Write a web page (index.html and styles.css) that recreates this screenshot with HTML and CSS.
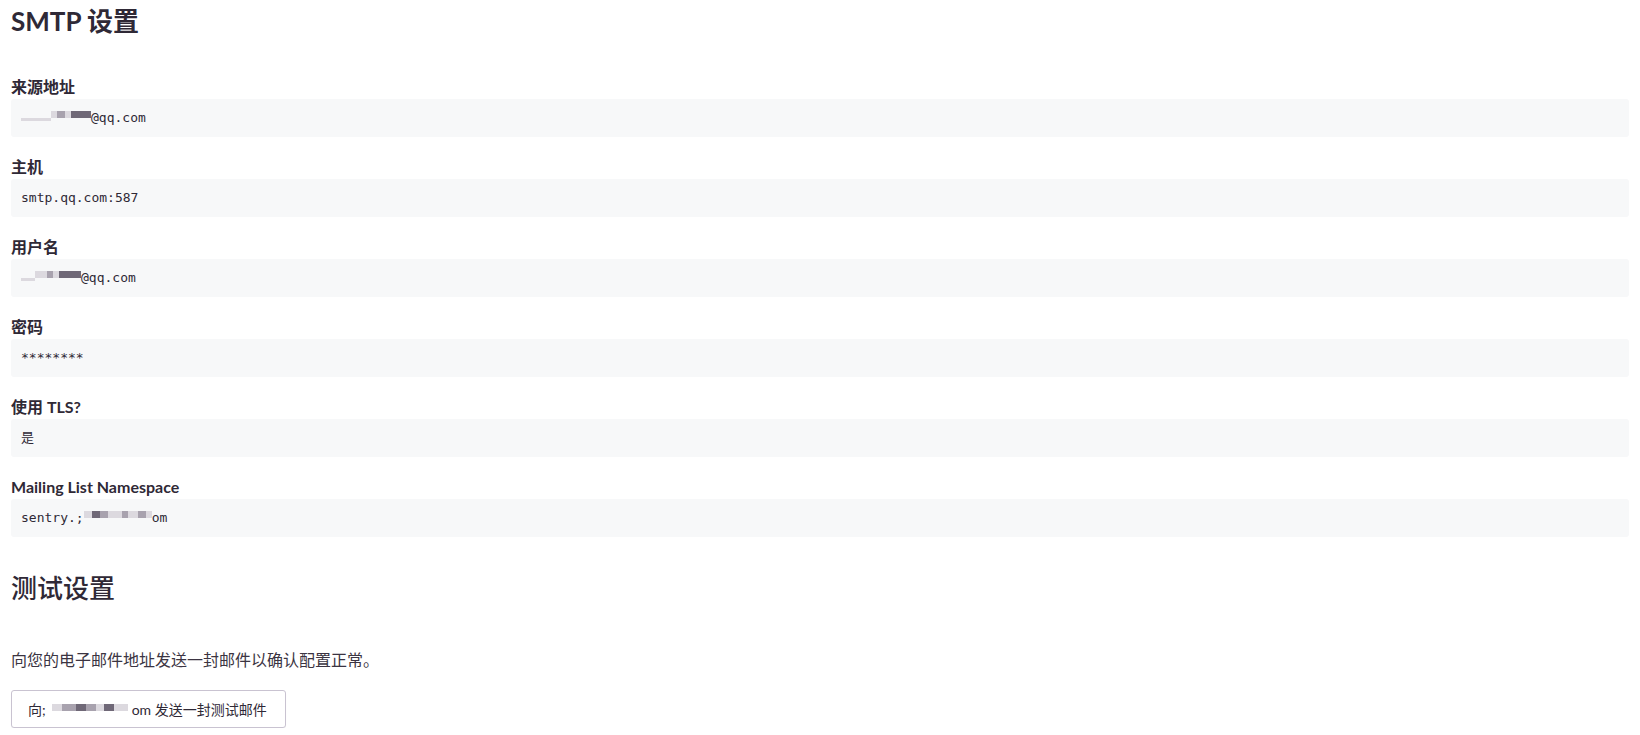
FILE: index.html
```
<!DOCTYPE html>
<html>
<head>
<meta charset="utf-8">
<meta name="viewport" content="width=device-width, initial-scale=1">
<title>SMTP 设置</title>
<link rel="stylesheet" href="styles.css">
</head>
<body>

<h2 class="section-title">SMTP 设置</h2>

<div class="field">
  <label>来源地址</label>
  <div class="value"><span class="blur"><i class="b lt w30 lo"></i><i class="b lt w6"></i><i class="b md w8"></i><i class="b lt w6"></i><i class="b dk w20"></i></span>@qq.com</div>
</div>

<div class="field">
  <label>主机</label>
  <div class="value">smtp.qq.com:587</div>
</div>

<div class="field">
  <label>用户名</label>
  <div class="value"><span class="blur"><i class="b lt w14 lo"></i><i class="b lt w12"></i><i class="b md w6"></i><i class="b lt w6"></i><i class="b dk w22"></i></span>@qq.com</div>
</div>

<div class="field">
  <label>密码</label>
  <div class="value">********</div>
</div>

<div class="field">
  <label>使用 TLS?</label>
  <div class="value">是</div>
</div>

<div class="field">
  <label>Mailing List Namespace</label>
  <div class="value">sentry.;<span class="blur"><i class="b lt w8"></i><i class="b dk w8"></i><i class="b md w8"></i><i class="b lt w14"></i><i class="b md w6"></i><i class="b lt w10"></i><i class="b md w8"></i><i class="b lt w6"></i></span>om</div>
</div>

<h2 class="section-title second">测试设置</h2>

<p class="help">向您的电子邮件地址发送一封邮件以确认配置正常。</p>

<button class="btn" type="button">向;<span class="blur wide"><i class="b lt w10"></i><i class="b md w14"></i><i class="b dk w10"></i><i class="b md w10"></i><i class="b lt w8"></i><i class="b dk w10"></i><i class="b lt w14"></i></span>om 发送一封测试邮件</button>

</body>
</html>
```

FILE: styles.css
```
* {box-sizing: border-box;}

body {
  margin: 0;
  padding: 6px 11px 0 11px;
  font-family: Lato, "Noto Sans CJK SC", sans-serif;
  color: #2f2936;
  background: #fff;
}

/* Section headings */
.section-title {
  margin: 0 0 44px 0;
  font-size: 26px;
  line-height: 30px;
  font-weight: 700;
  color: #2f2936;
}

.section-title.second {
  margin: 36px 0 47px 0;
  font-weight: 500;
}

/* Read-only settings rows */
.field {
  margin-bottom: 23px;
}

.field label {
  display: block;
  font-size: 16px;
  line-height: 14px;
  margin-bottom: 5px;
  font-weight: 700;
}

.field .value {
  height: 38px;
  line-height: 38px;
  padding: 0 10px;
  background-color: #f7f8f9;
  border-radius: 3px;
  font-family: "DejaVu Sans Mono", "Noto Sans CJK SC", monospace;
  font-size: 13px;
  color: #2f2936;
  white-space: nowrap;
}

.help {
  margin: 0 0 20px 0;
  font-size: 16px;
  line-height: 20px;
  color: #3b3442;
}

/* Test mail button */
.btn {
  display: inline-block;
  height: 38px;
  width: 275px;
  padding: 0 0 0 16px;
  text-align: left;
  background: #fff;
  border: 1px solid #c9c3d1;
  border-radius: 3px;
  box-shadow: 0 1px 1px rgba(0,0,0,0.04);
  font-family: Lato, "Noto Sans CJK SC", sans-serif;
  font-size: 14px;
  color: #2f2936;
  cursor: pointer;
}

/* pixelated (redacted) parts of the addresses */
.blur {
  display: inline-block;
  vertical-align: middle;
  height: 12px;
  margin-top: -3px;
  white-space: nowrap;
  font-size: 0;
}

.blur.wide {
  margin: -2px 4px 0 6px;
}

.b {
  display: inline-block;
  height: 7px;
  vertical-align: top;
}

.b.lo {height: 3px; margin-top: 7px;}

.lt {background: #dcd9df;}
.md {background: #a8a2ae;}
.dk {background: #6f6877;}

.w6 {width: 6px;}
.w8 {width: 8px;}
.w10 {width: 10px;}
.w12 {width: 12px;}
.w14 {width: 14px;}
.w20 {width: 20px;}
.w22 {width: 22px;}
.w30 {width: 30px;}
```
